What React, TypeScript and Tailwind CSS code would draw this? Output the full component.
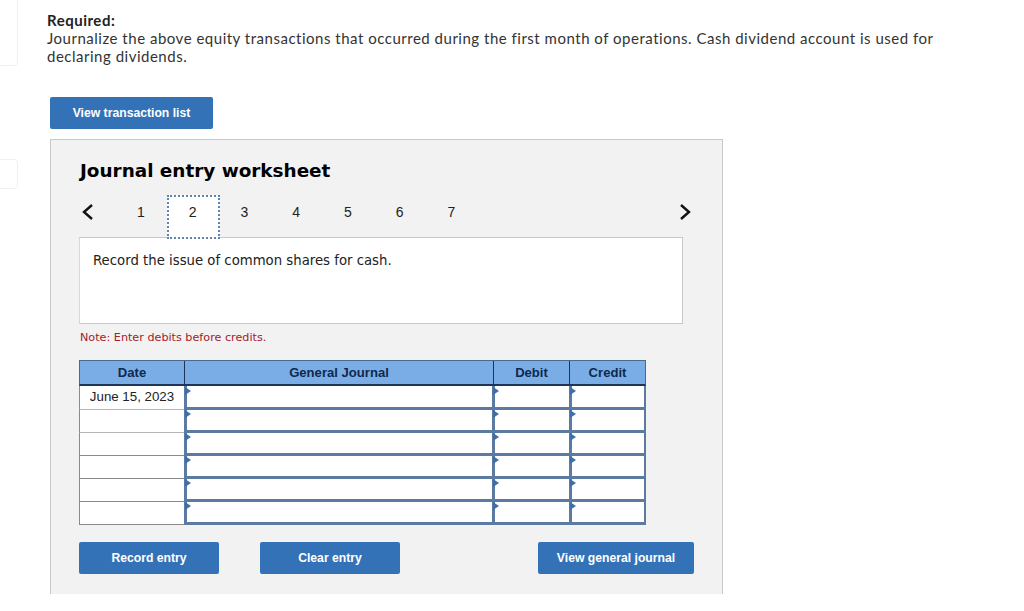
const steps = [1, 2, 3, 4, 5, 6, 7];
const rows = ['June 15, 2023', '', '', '', '', ''];

const Btn = ({ label, width }: { label: string; width: string }) => (
  <button className={`${width} h-[32px] rounded-[2px] bg-[#3472b8] text-white text-[12.2px] font-bold font-['Liberation_Sans',sans-serif]`}>
    {label}
  </button>
);

const InputCell = ({ first, last, width }: { first: boolean; last: boolean; width: string }) => (
  <div className={`relative ${width} ${first ? 'h-[24px]' : 'h-[23px]'} bg-white border-l-[3px] border-b-[3px] border-[#5b7ba3] ${last ? 'border-r-[2px]' : ''}`}>
    <span className={`absolute -left-[2px] ${first ? 'top-[1px]' : 'top-0'} w-0 h-0 border-y-[4px] border-y-transparent border-l-[6px] border-l-[#3f6fa8]`} />
  </div>
);

export default function App() {
  return (
    <div className="relative h-[611px] overflow-hidden bg-white">
      {/* faint boxes from the page behind, cut by the left edge */}
      <div className="absolute left-[-10px] top-[-10px] w-[28px] h-[76px] rounded-[4px] border border-[#f0f0f0]" />
      <div className="absolute left-[-10px] top-[159px] w-[28px] h-[30px] rounded-[4px] border border-[#f0f0f0]" />

      <div className="pl-[47px] pt-[11px]">
        <div className="w-[900px] text-[15px] leading-[18px] text-[#333] font-['Lato',sans-serif] tracking-[0.51px]">
          <div className="font-bold text-[#222]">Required:</div>
          <div>
            Journalize the above equity transactions that occurred during the first month of operations. Cash dividend account is used for declaring dividends.
          </div>
        </div>

        <div className="ml-[3px] mt-[32px]">
          <Btn label="View transaction list" width="w-[163px]" />
        </div>

        <div className="ml-[3px] mt-[10px] w-[673px] h-[455px] bg-[#f2f2f2] border border-b-0 border-[#c8c8c8] pl-[28px] pt-[17px]">
          <h2 className="ml-[1px] text-[18.4px] leading-[28px] font-bold text-black font-['DejaVu_Sans',sans-serif]">Journal entry worksheet</h2>

          <div className="relative flex items-center h-[46px] pb-[4px] mt-[6px] font-['Liberation_Sans',sans-serif] text-[14px] text-[#222]">
            <svg width="12" height="16" viewBox="0 0 12 16" className="ml-[3px] w-[12px] h-[16px]" fill="none" stroke="#111" strokeWidth="2.4">
              <path d="M10 1 2 8l8 7" />
            </svg>
            <div className="flex ml-[21px]">
              {steps.map((n) => (
                <div key={n} className="relative w-[51.75px] h-[42px] flex items-center justify-center">
                  {n === 2 && (
                    <span className="absolute left-0 top-[4px] w-[53px] h-[44px] z-10 bg-white border-2 border-dotted border-[#5f84ad]" />
                  )}
                  <span className="relative z-20">{n}</span>
                </div>
              ))}
            </div>
            <svg width="12" height="16" viewBox="0 0 12 16" className="absolute left-[600px] top-[13px] w-[12px] h-[16px]" fill="none" stroke="#111" strokeWidth="2.4">
              <path d="M2 1 10 8l-8 7" />
            </svg>
          </div>

          <div className="w-[604px] h-[87px] bg-white border border-[#c8c8c8] border-l-[#d8d8d8] pl-[13px] pt-[14px] text-[13.28px] leading-[18px] text-[#222] font-['DejaVu_Sans',sans-serif]">
            Record the issue of common shares for cash.
          </div>

          <p className="mt-[6px] ml-[1px] text-[11.2px] leading-[16px] text-[#a5202a] font-['DejaVu_Sans',sans-serif]">Note: Enter debits before credits.</p>

          <div className="mt-[14px] w-[567px] font-['Liberation_Sans',sans-serif] text-[13.3px]">
            <div className="flex h-[26px] bg-[#7aade6] border border-b-2 border-[#4a6a90] border-b-[#1d3557] font-bold text-[13.1px] text-[#10294d] leading-[23px] text-center">
              <div className="w-[104px]">Date</div>
              <div className="w-[309px] border-l border-[#1d3557]">General Journal</div>
              <div className="w-[76px] border-l border-[#1d3557]">Debit</div>
              <div className="w-[76px] border-l border-[#1d3557]">Credit</div>
            </div>
            {rows.map((date, i) => (
              <div key={i} className="flex">
                <div className={`w-[105px] ${i === 0 ? 'h-[24px]' : 'h-[23px]'} bg-white border-l border-b border-[#8a8a8a] text-center text-[#222] leading-[22px] ${i < 2 ? 'border-b-[#b5b5b5]' : ''}`}>
                  {date}
                </div>
                <InputCell first={i === 0} last={false} width="w-[308px]" />
                <InputCell first={i === 0} last={false} width="w-[77px]" />
                <InputCell first={i === 0} last={true} width="w-[77px]" />
              </div>
            ))}
          </div>

          <div className="flex mt-[17px] w-[615px] justify-between">
            <div className="flex gap-[41px]">
              <Btn label="Record entry" width="w-[140px]" />
              <Btn label="Clear entry" width="w-[140px]" />
            </div>
            <Btn label="View general journal" width="w-[156px]" />
          </div>
        </div>
      </div>
    </div>
  );
}
